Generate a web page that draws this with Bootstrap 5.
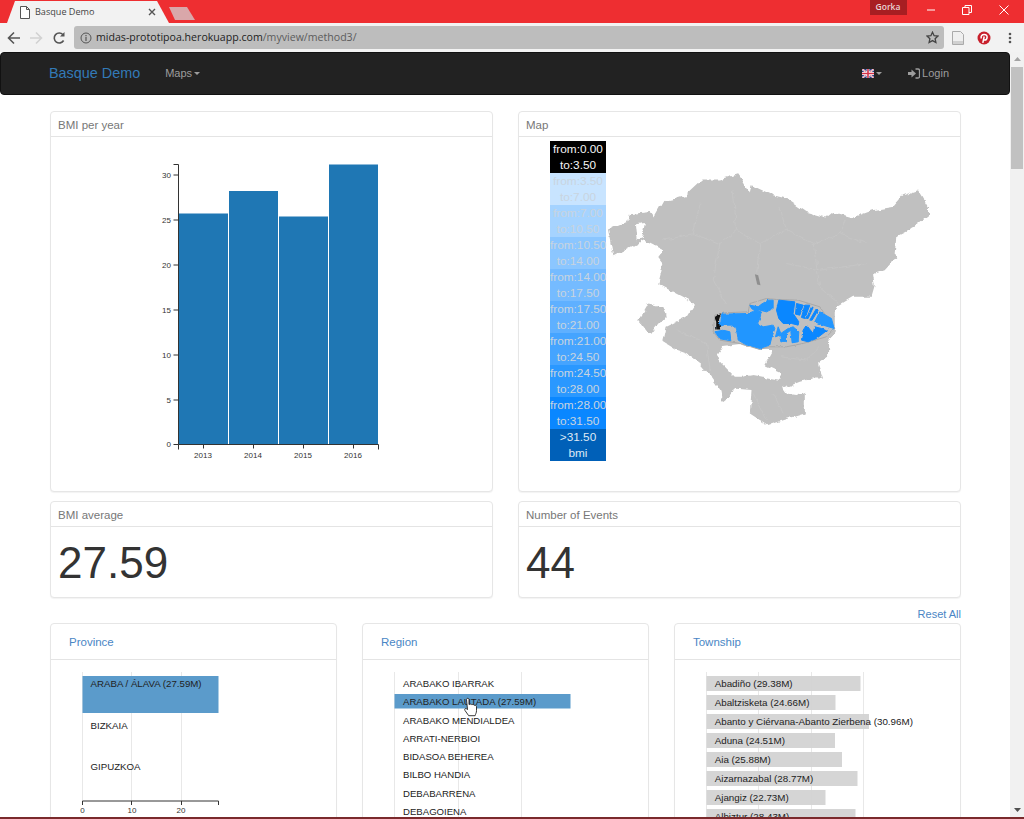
<!DOCTYPE html>
<html lang="en">
<head>
  <meta charset="UTF-8">
  <meta name="viewport" content="width=device-width, initial-scale=1.0">
  <title>Basque Demo</title>
  <link href="https://cdn.jsdelivr.net/npm/bootstrap@5.3.0/dist/css/bootstrap.min.css" rel="stylesheet">
  <style>
    html, body { height: 819px; overflow: hidden; }
    body { font-family: "Liberation Sans", Arial, sans-serif; font-size: 11.5px; color: #333; background: #fff; }
    .app-window { height: 819px; }

    /* browser frame */
    .tab-strip { height: 23px; background: #ee2e31; }
    .tab { width: 162px; margin-left: 7px; margin-top: 1px; padding: 0 13px 0 13px; background: #f2f2f2; clip-path: polygon(0 100%, 8px 0, 150px 0, 162px 100%); font-family: "Open Sans", sans-serif; font-size: 9.1px; color: #444; }
    .tab-icon { margin-right: 5px; }
    .tab-ghost { width: 26px; height: 13px; margin-top: 7px; background: #d9a7aa; clip-path: polygon(0 0, 18px 0, 26px 100%, 6px 100%); }
    .profile { width: 37px; height: 15px; background: #a81e22; color: #e8d5d5; font-family: "Open Sans", sans-serif; font-size: 8.5px; font-weight: 600; margin-right: 6px; }
    .win-buttons { margin-right: 2px; }
    .win-btn { width: 36.5px; height: 20px; }
    .toolbar { height: 29px; background: #f2f2f2; padding: 3px 0 3px 6.5px; }
    .tool-btn { width: 22.5px; }
    .omnibox { width: 870px; height: 23px; padding: 0 5px 0 6px; background: #bdbdbd; border-radius: 3px; font-family: "Open Sans", sans-serif; font-size: 10.6px; color: #222; }
    .omnibox .path { color: #5c5c5c; }
    .ext-icons { margin-left: 8px; }
    .ext-pin { margin-left: 13px; }
    .ext-menu { margin-left: 17px; }
    .window-edge { height: 2px; background: #7a2a2c; }

    /* navbar */
    .top-nav { height: 43px; background: #222; border: 1px solid #111; border-radius: 4px; padding: 0 60px 0 48px; }
    .top-nav .navbar-brand { color: #337ab7; font-size: 14.4px; padding: 0; margin-right: 25px; }
    .top-nav .navbar-nav .nav-link { color: #9d9d9d; font-size: 11px; padding: 0; }
    .top-nav .dropdown-toggle::after { margin-left: 2px; vertical-align: 2px; border-top-width: 3.5px; border-right-width: 3.5px; border-left-width: 3.5px; }
    .flag-item { margin-right: 26px; }
    .login-icon { margin-right: 2px; }

    /* page content */
    .page { padding: 16px 49px 0 50px; }
    .page .row { --bs-gutter-x: 25px; --bs-gutter-y: 0; }
    .panel { border-color: #e6e6e6; border-radius: 4px; box-shadow: 0 1px 1px rgba(0,0,0,.05); margin-bottom: 9px; }
    .panel .card-header { height: 25px; padding: 3px 7px 0; background: #fff; border-bottom: 1px solid #e4e4e4; color: #777; line-height: 1; }
    .panel-chart .card-body { height: 354px; padding: 0; }
    .panel-map .card-body { height: 354px; padding: 4px 0 0 31px; }
    .panel-number .card-body { height: 70px; padding: 1px 7px 0; font-size: 44px; line-height: 1; color: #333; }
    .panel-filter { margin-bottom: 0; }
    .panel .panel-filter-head { height: 36px; padding: 3px 18px 0; color: #4a86c5; }
    .panel-filter .card-body { padding: 0; }
    .reset-wrap { padding-top: 9px; }
    .reset-link { height: 16px; font-size: 11px; color: #4a86c5; text-decoration: none; line-height: 15px; }

    /* map legend */
    .legend { width: 56px; }
    .legend div { height: 32px; line-height: 16px; font-size: 11.8px; text-align: center; white-space: nowrap; color: #c8d4e0; }
    .legend .legend-0 { background: #000; color: #f5f5f5; }
    .legend .legend-1 { background: #c8e4ff; }
    .legend .legend-2 { background: #a5d3ff; }
    .legend .legend-3 { background: #8bc6ff; }
    .legend .legend-4 { background: #75bbff; }
    .legend .legend-5 { background: #5fb0ff; }
    .legend .legend-6 { background: #45a4ff; }
    .legend .legend-7 { background: #2a98ff; }
    .legend .legend-8 { background: #0a87ff; }
    .legend .legend-9 { background: #0060b8; color: #dfe9f5; }
    .map-svg { margin-top: 29px; }

    /* charts */
    svg { display: block; }
    .tick { font-size: 8px; fill: #333; font-family: "Liberation Sans", Arial, sans-serif; }
    .row-label { font-size: 9.8px; fill: #222; font-family: "Liberation Sans", Arial, sans-serif; }
    .province-chart .row-label { font-size: 9.7px; }
    .region-chart .row-label { font-size: 9.6px; }
    .axis { stroke: #333; stroke-width: 1; fill: none; }
    .grid { stroke: #e8e8e8; stroke-width: 1; }

    /* scrollbar */
    .fake-scroll { width: 14px; background: #f1f1f1; }
    .scroll-arrow { height: 14px; }
    .fake-thumb { height: 102px; margin: 1px 1px 0; background: #c1c1c1; }
  </style>
</head>
<body>
<div class="app-window d-flex flex-column">

  <div class="tab-strip d-flex flex-shrink-0">
    <div class="tab d-flex align-items-center">
      <svg class="tab-icon" width="10" height="13" viewBox="0 0 10 13"><path d="M.5.5h6l3 3v9H.5zM6.5.5v3h3" fill="#fff" stroke="#555"/></svg>
      <span class="flex-grow-1">Basque Demo</span>
      <svg width="8" height="8" viewBox="0 0 8 8"><path d="M1 1l6 6M7 1L1 7" stroke="#555" stroke-width="1.4"/></svg>
    </div>
    <div class="tab-ghost"></div>
    <div class="ms-auto d-flex align-items-start">
      <div class="profile d-flex align-items-center justify-content-center">Gorka</div>
      <div class="win-buttons d-flex">
        <div class="win-btn d-flex align-items-center justify-content-center"><svg width="10" height="2"><path d="M1 1h8" stroke="#fff"/></svg></div>
        <div class="win-btn d-flex align-items-center justify-content-center"><svg width="10" height="10" viewBox="0 0 10 10"><path d="M.5 2.5h6.5v7H.5zM3 2.5V.5h6.5v7H7" fill="none" stroke="#fff"/></svg></div>
        <div class="win-btn d-flex align-items-center justify-content-center"><svg width="10" height="10" viewBox="0 0 10 10"><path d="M.5.5l9 9M9.5.5l-9 9" stroke="#fff"/></svg></div>
      </div>
    </div>
  </div>

  <div class="toolbar d-flex align-items-center flex-shrink-0">
    <div class="tool-btn"><svg width="14" height="14" viewBox="0 0 14 14"><path d="M13 7H2M7 1.5L1.5 7 7 12.5" fill="none" stroke="#555" stroke-width="1.6"/></svg></div>
    <div class="tool-btn"><svg width="14" height="14" viewBox="0 0 14 14"><path d="M1 7h11M7 1.5L12.5 7 7 12.5" fill="none" stroke="#d2d2d2" stroke-width="1.6"/></svg></div>
    <div class="tool-btn"><svg width="14" height="14" viewBox="0 0 14 14"><path d="M11.6 9.5A5 5 0 1 1 11 3.7" fill="none" stroke="#555" stroke-width="1.6"/><path d="M12.5 1v4.5H8z" fill="#555"/></svg></div>
    <div class="omnibox d-flex align-items-center flex-shrink-0">
      <svg width="12" height="12" viewBox="0 0 12 12" class="me-1"><circle cx="6" cy="6" r="5" fill="none" stroke="#555"/><path d="M6 5v4M6 3v1.2" stroke="#555" stroke-width="1.2"/></svg>
      <span>midas-prototipoa.herokuapp.com<span class="path">/myview/method3/</span></span>
      <svg width="13" height="13" viewBox="0 0 13 13" class="ms-auto"><path d="M6.5 1.2l1.6 3.5 3.800.4-2.800 2.600.8 3.800-3.400-1.900-3.400 1.900.8-3.800L1.100 5.100l3.800-.4z" fill="none" stroke="#444" stroke-width="1.3"/></svg>
    </div>
    <div class="ext-icons d-flex align-items-center">
      <svg width="12" height="14" viewBox="0 0 12 14"><path d="M.5.5h8l3 3v10H.5z" fill="#efefef" stroke="#aaa"/><path d="M1 10h10v3H1z" fill="#d0d0d0"/></svg>
      <svg class="ext-pin" width="14" height="14" viewBox="0 0 14 14"><circle cx="7" cy="7" r="6.5" fill="#c8202c"/><path d="M5.800 11.800l1.400-6.300M4.300 7.400C3.400 5 5.200 3.400 7.200 3.400c2 0 3.100 1.200 2.900 3-.2 1.700-1.200 2.800-2.400 2.700-.7-.1-1.100-.4-1.300-.8" fill="none" stroke="#fff" stroke-width="1.5"/></svg>
      <svg class="ext-menu" width="4" height="12" viewBox="0 0 4 12"><circle cx="2" cy="2" r="1.3" fill="#555"/><circle cx="2" cy="6" r="1.3" fill="#555"/><circle cx="2" cy="10" r="1.3" fill="#555"/></svg>
    </div>
  </div>

  <div class="d-flex flex-grow-1 overflow-hidden">
    <div class="flex-grow-1 overflow-hidden">
      <nav class="navbar navbar-expand top-nav">
        <a class="navbar-brand" href="#">Basque Demo</a>
        <ul class="navbar-nav">
          <li class="nav-item"><a class="nav-link dropdown-toggle" href="#">Maps</a></li>
        </ul>
        <ul class="navbar-nav ms-auto align-items-center">
          <li class="nav-item flag-item">
            <a class="nav-link dropdown-toggle d-flex align-items-center" href="#">
              <svg width="12" height="9" viewBox="0 0 60 45"><rect width="60" height="45" fill="#2b3f86"/><path d="M0 0l60 45M60 0L0 45" stroke="#fff" stroke-width="9"/><path d="M0 0l60 45M60 0L0 45" stroke="#d3324a" stroke-width="3"/><path d="M30 0v45M0 22.5h60" stroke="#fff" stroke-width="14"/><path d="M30 0v45M0 22.5h60" stroke="#d3324a" stroke-width="8"/></svg>
            </a>
          </li>
          <li class="nav-item">
            <a class="nav-link d-flex align-items-center" href="#">
              <svg class="login-icon" width="12" height="11" viewBox="0 0 12 11"><path d="M0 4h3.500V1.500L8 5.500l-4.500 4V7H0z" fill="#9d9d9d"/><path d="M7.500 1H10a1.500 1.500 0 0 1 1.500 1.500v6A1.500 1.500 0 0 1 10 10H7.500" fill="none" stroke="#9d9d9d" stroke-width="1.3"/></svg>
              Login
            </a>
          </li>
        </ul>
      </nav>

      <div class="page">
        <div class="row">
          <div class="col-6">
            <div class="card panel panel-chart">
              <div class="card-header d-flex align-items-center">BMI per year</div>
              <div class="card-body">
                <svg width="441" height="354" viewBox="51 137 441 354">
                  <g fill="#1f77b4">
                    <rect x="179" y="213.5" width="49" height="231"/>
                    <rect x="229" y="191" width="49" height="253.5"/>
                    <rect x="279" y="216.5" width="49" height="228"/>
                    <rect x="329" y="164.5" width="49" height="280"/>
                  </g>
                  <path class="axis" d="M173.5 164.500h5v280h200v5M178.500 444.500v5M173.500 175h5M173.500 220h5M173.500 265h5M173.500 310h5M173.500 355h5M173.500 400h5M173.500 444.500h5M203.500 444.500v4M253.500 444.500v4M303.500 444.500v4M353.500 444.500v4"/>
                  <g class="tick" text-anchor="end">
                    <text x="171" y="178">30</text><text x="171" y="223">25</text><text x="171" y="268">20</text>
                    <text x="171" y="313">15</text><text x="171" y="358">10</text><text x="171" y="403">5</text><text x="171" y="447">0</text>
                  </g>
                  <g class="tick" text-anchor="middle">
                    <text x="203" y="458">2013</text><text x="253" y="458">2014</text><text x="303" y="458">2015</text><text x="353" y="458">2016</text>
                  </g>
                </svg>
              </div>
            </div>
          </div>
          <div class="col-6">
            <div class="card panel panel-map">
              <div class="card-header d-flex align-items-center">Map</div>
              <div class="card-body d-flex align-items-start">
                <div class="legend flex-shrink-0">
                  <div class="legend-0">from:0.00<br>to:3.50</div>
                  <div class="legend-1">from:3.50<br>to:7.00</div>
                  <div class="legend-2">from:7.00<br>to:10.50</div>
                  <div class="legend-3">from:10.50<br>to:14.00</div>
                  <div class="legend-4">from:14.00<br>to:17.50</div>
                  <div class="legend-5">from:17.50<br>to:21.00</div>
                  <div class="legend-6">from:21.00<br>to:24.50</div>
                  <div class="legend-7">from:24.50<br>to:28.00</div>
                  <div class="legend-8">from:28.00<br>to:31.50</div>
                  <div class="legend-9">&gt;31.50<br>bmi</div>
                </div>
                <svg class="map-svg" width="327" height="257" viewBox="258 120 982 770">
                  <defs>
                    <filter id="rough" x="-5%" y="-5%" width="110%" height="110%" color-interpolation-filters="sRGB">
                      <feTurbulence type="fractalNoise" baseFrequency=".045" numOctaves="3" seed="4"/>
                      <feDisplacementMap in="SourceGraphic" scale="16" xChannelSelector="R" yChannelSelector="G"/>
                    </filter>
                    <filter id="rough-small" x="-5%" y="-5%" width="110%" height="110%" color-interpolation-filters="sRGB">
                      <feTurbulence type="fractalNoise" baseFrequency=".08" numOctaves="2" seed="9"/>
                      <feDisplacementMap in="SourceGraphic" scale="7" xChannelSelector="R" yChannelSelector="G"/>
                    </filter>
                  </defs>
                  <g filter="url(#rough)">
                    <path fill="#c0c0c0" fill-rule="evenodd" d="M264 298L325 270 330 252 390 245 402 262 430 212 470 205 505 195 500 190 545 148 600 148 655 132 668 150 690 190 695 165 760 195 800 205 860 245 920 262 940 245 1000 262 1060 240 1120 230 1150 195 1195 180 1225 230 1225 258 1170 300 1130 320 1125 370 1130 380 1095 420 1060 432 1065 465 1055 500 1000 500 950 530 945 545 945 600 925 640 925 680 895 700 910 745 880 745 840 755 790 775 800 790 830 795 855 785 855 850 790 870 745 885 720 870 690 850 695 780 640 775 630 800 610 815 605 785 570 735 540 700 500 670 470 660 430 635 440 590 500 560 525 520 430 470 415 460 430 400 415 380 430 360 370 330 280 378zM345 282L375 278 365 325 350 330zM590 680L610 648 660 642 720 660 760 660 735 705 780 725 785 750 700 735 670 740 645 740 600 695z"/>
                    <path fill="#c0c0c0" d="M355 570L385 520 430 530 440 555 410 590 390 615z"/>
                    <path fill="none" stroke="#cbcbcb" stroke-width="1.5" d="M430 330L520 310 600 340 650 300 720 340 800 300 880 340 960 310 1040 340M520 310L540 220M650 300L640 180M800 300L780 230M960 310L980 270M600 340L580 450 620 520M720 340L710 430M880 340L900 470 960 520M800 400L900 420 1040 400M470 600L560 640 570 720M780 680L860 690 900 650M700 790L740 870M760 790L790 850"/>
                  </g>
                  <path fill="#8f8f8f" d="M705 432L715 435 722 465 712 463z"/>
                  <g transform="translate(555 480)" filter="url(#rough-small)">
                    <path fill="#c0c0c0" stroke="#a8a8a8" stroke-width="3" d="M25 125L30 75 60 68 130 65 135 40 185 25 215 28 280 30 345 50 390 115 365 140 295 160 245 170 190 170 165 178 105 160 45 150z"/>
                    <g fill="#2196ff" stroke="#2196ff" stroke-width="3">
                      <path d="M50 72L130 70 150 62 170 65 165 85 158 100 175 110 205 105 210 115 200 145 195 165 165 175 120 162 100 150 95 115 80 105 55 105 35 112 48 95z"/>
                      <path d="M30 125L55 120 75 125 78 152 45 146z"/>
                      <path d="M135 45L160 50 170 42 190 30 205 30 205 55 185 65 165 60 150 62 140 55z"/>
                      <path d="M345 65L380 85 388 115 355 105 330 95z"/>
                      <path d="M220 110L228 130 250 115 265 110 282 125 280 155 262 158 258 120 245 130 245 155 228 155 225 135 212 140z"/>
                    </g>
                    <g fill="#0a87ff" stroke="#0a87ff" stroke-width="3">
                      <path d="M222 30L270 35 265 70 282 95 280 105 260 100 235 100 222 85 215 60z"/>
                      <path d="M275 40L295 45 285 75 272 72zM300 45L315 45 300 85 290 82zM320 50L325 52 310 85 305 85zM335 55L340 60 322 90 315 90z"/>
                      <path d="M330 110L350 115 365 122 335 145 310 155 290 150 295 120 305 105 325 130z"/>
                    </g>
                    <path fill="#111" d="M38 72L48 70 42 90 46 118 34 118 34 95 30 85z"/>
                  </g>
                </svg>
              </div>
            </div>
          </div>
        </div>

        <div class="row">
          <div class="col-6">
            <div class="card panel panel-number mb-0">
              <div class="card-header d-flex align-items-center">BMI average</div>
              <div class="card-body d-flex align-items-center">27.59</div>
            </div>
          </div>
          <div class="col-6">
            <div class="card panel panel-number mb-0">
              <div class="card-header d-flex align-items-center">Number of Events</div>
              <div class="card-body d-flex align-items-center">44</div>
            </div>
          </div>
        </div>

        <div class="text-end reset-wrap">
          <a class="reset-link d-block" href="#">Reset All</a>
        </div>

        <div class="row">
          <div class="col-4">
            <div class="card panel panel-filter">
              <div class="card-header panel-filter-head d-flex align-items-center">Province</div>
              <div class="card-body">
                <svg class="province-chart" width="285" height="170" viewBox="51 660 285 170">
                  <path class="grid" d="M82.5 672v130M131.5 672v130M181.5 672v130"/>
                  <rect x="82.5" y="676" width="136" height="37" fill="#5b9bcb"/>
                  <text class="row-label" x="90.5" y="687">ARABA / ÁLAVA (27.59M)</text>
                  <text class="row-label" x="90.5" y="728.5">BIZKAIA</text>
                  <text class="row-label" x="90.5" y="770">GIPUZKOA</text>
                  <path class="axis" d="M82.5 805v-4h136v4M131.5 801v4M181.5 801v4"/>
                  <g class="tick" text-anchor="middle">
                    <text x="82.5" y="813">0</text><text x="132" y="813">10</text><text x="181" y="813">20</text>
                  </g>
                </svg>
              </div>
            </div>
          </div>
          <div class="col-4">
            <div class="card panel panel-filter">
              <div class="card-header panel-filter-head d-flex align-items-center">Region</div>
              <div class="card-body">
                <svg class="region-chart" width="285" height="170" viewBox="363 660 285 170">
                  <path class="grid" d="M394.5 672v160M458.5 672v160M521.5 672v160"/>
                  <rect x="394.5" y="694" width="176" height="14.5" fill="#5b9bcb"/>
                  <text class="row-label" x="403" y="687">ARABAKO IBARRAK</text>
                  <text class="row-label" x="403" y="705">ARABAKO LAUTADA (27.59M)</text>
                  <text class="row-label" x="403" y="723.5">ARABAKO MENDIALDEA</text>
                  <text class="row-label" x="403" y="741.5">ARRATI-NERBIOI</text>
                  <text class="row-label" x="403" y="760">BIDASOA BEHEREA</text>
                  <text class="row-label" x="403" y="778">BILBO HANDIA</text>
                  <text class="row-label" x="403" y="796.5">DEBABARRENA</text>
                  <text class="row-label" x="403" y="814.5">DEBAGOIENA</text>
                  <path fill="#fff" stroke="#222" stroke-width=".9" d="M466.5 699.5c0-1.600 2.500-1.600 2.500 0v5c1.500-.7 2.500-.4 2.800.2 1.200-.4 2.200-.1 2.500.6 1.300-.3 2.200.3 2.200 1.400v4c0 2.200-1 3.300-1.400 5h-6.400l-3.700-5.200c-1-1.600 .6-2.600 1.800-1.600l.7.700z"/>
                </svg>
              </div>
            </div>
          </div>
          <div class="col-4">
            <div class="card panel panel-filter">
              <div class="card-header panel-filter-head d-flex align-items-center">Township</div>
              <div class="card-body">
                <svg width="285" height="170" viewBox="675 660 285 170">
                  <path class="grid" d="M706.5 672v160M758.5 672v160M811.5 672v160M863.5 672v160"/>
                  <g fill="#d3d3d3" fill-opacity=".95">
                    <rect x="706.5" y="676" width="154" height="15"/>
                    <rect x="706.5" y="695" width="129" height="15"/>
                    <rect x="706.5" y="714" width="162.5" height="15"/>
                    <rect x="706.5" y="733" width="128.5" height="15"/>
                    <rect x="706.5" y="752" width="135.5" height="15"/>
                    <rect x="706.5" y="771" width="151" height="15"/>
                    <rect x="706.5" y="790" width="119" height="15"/>
                    <rect x="706.5" y="809" width="149" height="15"/>
                  </g>
                  <text class="row-label" x="714.7" y="686.5">Abadiño (29.38M)</text>
                  <text class="row-label" x="714.7" y="705.5">Abaltzisketa (24.66M)</text>
                  <text class="row-label" x="714.7" y="724.5">Abanto y Ciérvana-Abanto Zierbena (30.96M)</text>
                  <text class="row-label" x="714.7" y="743.5">Aduna (24.51M)</text>
                  <text class="row-label" x="714.7" y="762.5">Aia (25.88M)</text>
                  <text class="row-label" x="714.7" y="781.5">Aizarnazabal (28.77M)</text>
                  <text class="row-label" x="714.7" y="800.5">Ajangiz (22.73M)</text>
                  <text class="row-label" x="714.7" y="819.5">Albiztur (28.43M)</text>
                </svg>
              </div>
            </div>
          </div>
        </div>
      </div>
    </div>

    <div class="fake-scroll flex-shrink-0 d-flex flex-column">
      <div class="scroll-arrow d-flex align-items-center justify-content-center"><svg width="7" height="4" viewBox="0 0 7 4"><path d="M3.5 0L7 4H0z" fill="#a3a3a3"/></svg></div>
      <div class="fake-thumb"></div>
      <div class="scroll-arrow mt-auto d-flex align-items-center justify-content-center"><svg width="7" height="4" viewBox="0 0 7 4"><path d="M0 0h7L3.5 4z" fill="#505050"/></svg></div>
    </div>
  </div>

  <div class="window-edge flex-shrink-0"></div>
</div>

<script src="https://cdn.jsdelivr.net/npm/bootstrap@5.3.0/dist/js/bootstrap.bundle.min.js"></script>
</body>
</html>
